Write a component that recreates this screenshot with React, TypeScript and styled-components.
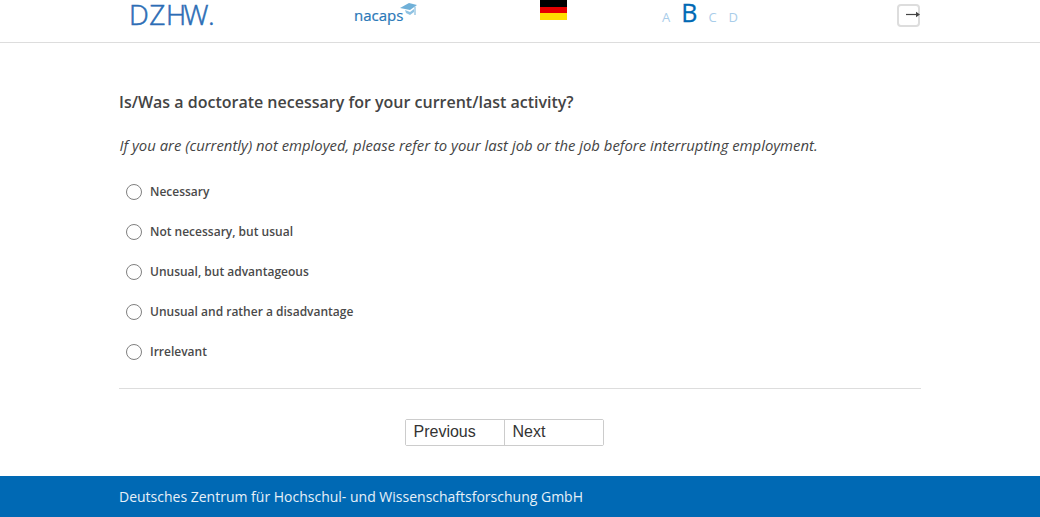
import React from "react";
import styled, { createGlobalStyle } from "styled-components";

const Global = createGlobalStyle`
  html, body { margin: 0; padding: 0; background: #fff; }
  body { font-family: "Open Sans", "Liberation Sans", sans-serif; color: #444; }
`;

const Page = styled.div`
  width: 1040px;
  height: 517px;
  display: flex;
  flex-direction: column;
  overflow: hidden;
`;

const Header = styled.header`
  height: 42px;
  flex: none;
  border-bottom: 1px solid #ddd;
  display: grid;
  grid-template-columns: 129px 225px 186px 122px 235px 1fr;
  align-items: start;
`;

const DzhwLogo = styled.div`
  grid-column: 2;
  display: flex;
  font-size: 28px;
  font-weight: 300;
  line-height: 29px;
  color: #2c6db5;
  -webkit-text-stroke: 0.55px #2c6db5;
`;

const Spacer = styled.div`
  grid-column: 1;
`;

const DzhwPart = styled.span<{ $spacing: number }>`
  letter-spacing: ${(p) => p.$spacing}px;
`;

const NacapsLogo = styled.div`
  grid-column: 3;
  display: flex;
  align-items: flex-start;
`;

const NacapsText = styled.span`
  font-size: 15px;
  line-height: 20px;
  margin-top: 5px;
  color: #2a78b8;
  -webkit-text-stroke: 0.2px #2a78b8;
`;

const Hat = styled.svg`
  width: 17px;
  height: 15px;
  margin: 2px 0 0 -3px;
`;

const Flag = styled.div`
  grid-column: 4;
  width: 27px;
  height: 20px;
  background: linear-gradient(#000 0 33.3%, #e60000 33.3% 66.6%, #ffdf00 66.6% 100%);
`;

const Letters = styled.div`
  grid-column: 5;
  display: flex;
  align-items: baseline;
  height: 30px;
`;

const Letter = styled.span<{ $active?: boolean; $gap: number }>`
  font-size: ${(p) => (p.$active ? 25 : 13)}px;
  line-height: 24px;
  margin-left: ${(p) => p.$gap}px;
  color: ${(p) => (p.$active ? "#0069b4" : "#a9cdea")};
  -webkit-text-stroke: ${(p) => (p.$active ? "0.3px #0069b4" : "0")};
`;

const ExitButton = styled.button`
  grid-column: 6;
  position: relative;
  width: 23px;
  height: 23px;
  margin: 4px 0 0 0;
  padding: 0;
  box-sizing: border-box;
  background: #fff;
  border: 2px solid #ddd;
  border-radius: 4px;
`;

const ExitArrow = styled.svg`
  position: absolute;
  left: 7px;
  top: 4px;
  width: 15px;
  height: 9px;
  overflow: visible;
`;

const Main = styled.main`
  flex: 1;
  width: 802px;
  margin: 0 auto;
  display: flex;
  flex-direction: column;
`;

const Question = styled.h1`
  margin: 47px 0 0;
  font-size: 16px;
  line-height: 24px;
  font-weight: 600;
  color: #444;
`;

const Instruction = styled.p`
  margin: 19px 0 0 0.5px;
  font-size: 14.87px;
  line-height: 24px;
  font-style: italic;
  color: #444;
`;

const Options = styled.div`
  margin-top: 15px;
  display: flex;
  flex-direction: column;
`;

const Option = styled.label`
  height: 40px;
  display: flex;
  align-items: center;
  padding-left: 7px;
`;

const RadioMark = styled.span`
  width: 16px;
  height: 16px;
  box-sizing: border-box;
  border: 1.5px solid #808080;
  border-radius: 50%;
  background: #fff;
  flex: none;
`;

const OptionText = styled.span`
  margin-left: 8px;
  padding-bottom: 2px;
  font-size: 12px;
  font-weight: 600;
  color: #4a4a4a;
`;

const Rule = styled.hr`
  margin: 16px 0 0;
  border: 0;
  border-top: 1px solid #ddd;
  width: 100%;
`;

const Pager = styled.div`
  margin: 30px 0 0 286px;
  width: 199px;
  height: 27px;
  box-sizing: border-box;
  display: flex;
  border: 1px solid #ccc;
  border-radius: 2px;
`;

const PagerButton = styled.button<{ $first?: boolean }>`
  flex: 1;
  padding: 0 0 2px 7.5px;
  background: #fff;
  border: 0;
  border-right: ${(p) => (p.$first ? "1px solid #ccc" : "0")};
  font-family: "Liberation Sans", Arial, sans-serif;
  font-size: 16px;
  line-height: 1;
  color: #333;
  text-align: left;
`;

const Footer = styled.footer`
  height: 41px;
  flex: none;
  background: #0069b4;
  display: flex;
  align-items: center;
  padding-left: 119px;
  font-size: 14px;
  color: #e6f0f8;
`;

const options = [
  "Necessary",
  "Not necessary, but usual",
  "Unusual, but advantageous",
  "Unusual and rather a disadvantage",
  "Irrelevant",
];

export default function App() {
  return (
    <Page>
      <Global />
      <Header>
        <Spacer />
        <DzhwLogo>
          <DzhwPart $spacing={0.5}>DZ</DzhwPart>
          <DzhwPart $spacing={-2.5}>H</DzhwPart>
          <DzhwPart $spacing={-0.5}>W.</DzhwPart>
        </DzhwLogo>
        <NacapsLogo>
          <NacapsText>nacaps</NacapsText>
          <Hat viewBox="0 0 17 15">
            <path d="M0 6 L9 1 L17 3 L10 8 Z" fill="#6fb0d8" />
            <path d="M5 8 L10 10 L14 7 L14 10 L10 13 L6 11 Z" fill="#8fc2e2" />
            <path d="M14.5 5 L15.5 4.5 L15.5 13 L14.5 13 Z" fill="#6fb0d8" />
          </Hat>
        </NacapsLogo>
        <Flag />
        <Letters>
          <Letter $gap={0}>A</Letter>
          <Letter $gap={11} $active>B</Letter>
          <Letter $gap={11}>C</Letter>
          <Letter $gap={12}>D</Letter>
        </Letters>
        <ExitButton aria-label="Exit">
          <ExitArrow viewBox="0 0 15 9">
            <path d="M0 4.5 H11" stroke="#444" strokeWidth="1.2" />
            <path d="M10 1.8 L14 4.5 L10 7.2 Z" fill="#444" />
          </ExitArrow>
        </ExitButton>
      </Header>
      <Main>
        <Question>Is/Was a doctorate necessary for your current/last activity?</Question>
        <Instruction>
          If you are (currently) not employed, please refer to your last job or the job before interrupting employment.
        </Instruction>
        <Options>
          {options.map((o) => (
            <Option key={o}>
              <RadioMark />
              <OptionText>{o}</OptionText>
            </Option>
          ))}
        </Options>
        <Rule />
        <Pager>
          <PagerButton $first>Previous</PagerButton>
          <PagerButton>Next</PagerButton>
        </Pager>
      </Main>
      <Footer>Deutsches Zentrum für Hochschul- und Wissenschaftsforschung GmbH</Footer>
    </Page>
  );
}
